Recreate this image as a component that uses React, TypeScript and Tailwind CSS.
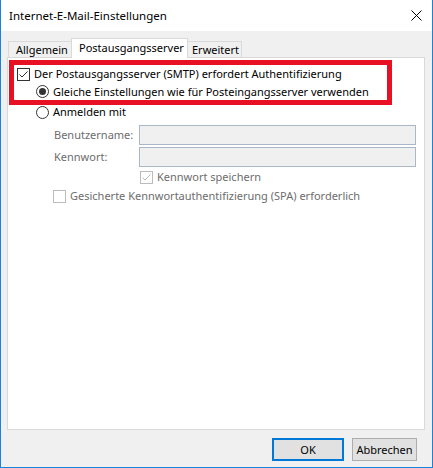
import React from "react";

const font = { fontFamily: '"Noto Sans", "Open Sans", sans-serif' };

function CheckBox({ checked, disabled }: { checked?: boolean; disabled?: boolean }) {
  const c = disabled ? "#bcbcbc" : "#333333";
  return (
    <span
      className={`flex h-[13px] w-[13px] shrink-0 items-center justify-center border bg-white ${
        disabled ? "border-[#bcbcbc]" : "border-[#333333]"
      }`}
    >
      {checked && (
        <svg width="11" height="11" viewBox="0 0 11 11">
          <path d="M1.5 5.5 L4 8 L9.5 2.5" fill="none" stroke={c} strokeWidth="1" />
        </svg>
      )}
    </span>
  );
}

function Radio({ checked }: { checked?: boolean }) {
  return (
    <span className="flex h-[13px] w-[13px] shrink-0 items-center justify-center rounded-full border border-[#333333] bg-white">
      {checked && <span className="h-[7px] w-[7px] rounded-full bg-[#333333]" />}
    </span>
  );
}

export default function App() {
  return (
    <div
      style={font}
      className="flex h-[468px] w-[433px] flex-col whitespace-nowrap border-x border-b border-[#1883d7] bg-[#f0f0f0] text-[11px] leading-[14px] text-black"
    >
      {/* Titelleiste */}
      <div className="flex h-[31px] shrink-0 items-center justify-between bg-white pl-2 pr-[10px]">
        <span className="text-[11.5px]">Internet-E-Mail-Einstellungen</span>
        <svg width="11" height="11" viewBox="0 0 11 11">
          <path d="M0.5 0.5 L10.5 10.5 M10.5 0.5 L0.5 10.5" stroke="#000" strokeWidth="1" />
        </svg>
      </div>

      <div className="flex flex-1 flex-col pl-[6px] pr-[7px] pt-[7px]">
        {/* Reiter */}
        <div className="relative z-10 flex h-[19px] items-end pl-[1px]">
          <div className="flex h-[16px] w-[63px] items-center border-l border-t border-[#d9d9d9] pl-[7px]">
            Allgemein
          </div>
          <div className="-mb-[1px] flex h-[20px] w-[117px] items-center border-x border-t border-[#d9d9d9] bg-white pl-[7px] pb-[2px]">
            Postausgangsserver
          </div>
          <div className="flex h-[16px] w-[54px] items-center border-r border-t border-[#d9d9d9] pl-[4px]">
            Erweitert
          </div>
        </div>

        {/* Inhalt */}
        <div className="h-[373px] border border-[#d9d9d9] bg-white">
          <div className="ml-[1px] mt-[2px] h-[45px] w-[383px] border-[5px] border-[#e81123]">
            <div className="flex h-[18px] items-center pl-[3px]">
              <CheckBox checked />
              <span className="ml-[4px]">Der Postausgangsserver (SMTP) erfordert Authentifizierung</span>
            </div>
            <div className="flex h-[17px] items-center pl-[22px]">
              <Radio checked />
              <span className="ml-[4px]">Gleiche Einstellungen wie für Posteingangsserver verwenden</span>
            </div>
          </div>

          <div className="flex h-[14px] items-center pl-[28px]">
            <Radio />
            <span className="ml-[4px]">Anmelden mit</span>
          </div>

          <div className="mt-[6px] flex h-[20px] items-center pl-[46px] text-[#6d6d6d]">
            <span className="w-[85px]">Benutzername:</span>
            <div className="h-[20px] w-[277px] border border-[#a9b7c9] bg-[#f0f0f0]" />
          </div>
          <div className="mt-[2px] flex h-[20px] items-center pl-[46px] text-[#6d6d6d]">
            <span className="w-[85px]">Kennwort:</span>
            <div className="h-[20px] w-[277px] border border-[#a9b7c9] bg-[#f0f0f0]" />
          </div>

          <div className="mt-[3px] flex h-[14px] items-center pl-[132px] text-[#6d6d6d]">
            <CheckBox checked disabled />
            <span className="ml-[4px]">Kennwort speichern</span>
          </div>
          <div className="mt-[5px] flex h-[14px] items-center pl-[45px] text-[#6d6d6d]">
            <CheckBox disabled />
            <span className="ml-[4px]">Gesicherte Kennwortauthentifizierung (SPA) erforderlich</span>
          </div>
        </div>

        {/* Schaltflächen */}
        <div className="mt-[8px] flex justify-end gap-[8px] pr-[8px]">
          <button className="h-[23px] w-[72px] border-2 border-[#0078d7] bg-[#e1e1e1]">
            OK
          </button>
          <button className="h-[23px] w-[65px] border border-[#adadad] bg-[#e1e1e1]">
            Abbrechen
          </button>
        </div>
      </div>
    </div>
  );
}
